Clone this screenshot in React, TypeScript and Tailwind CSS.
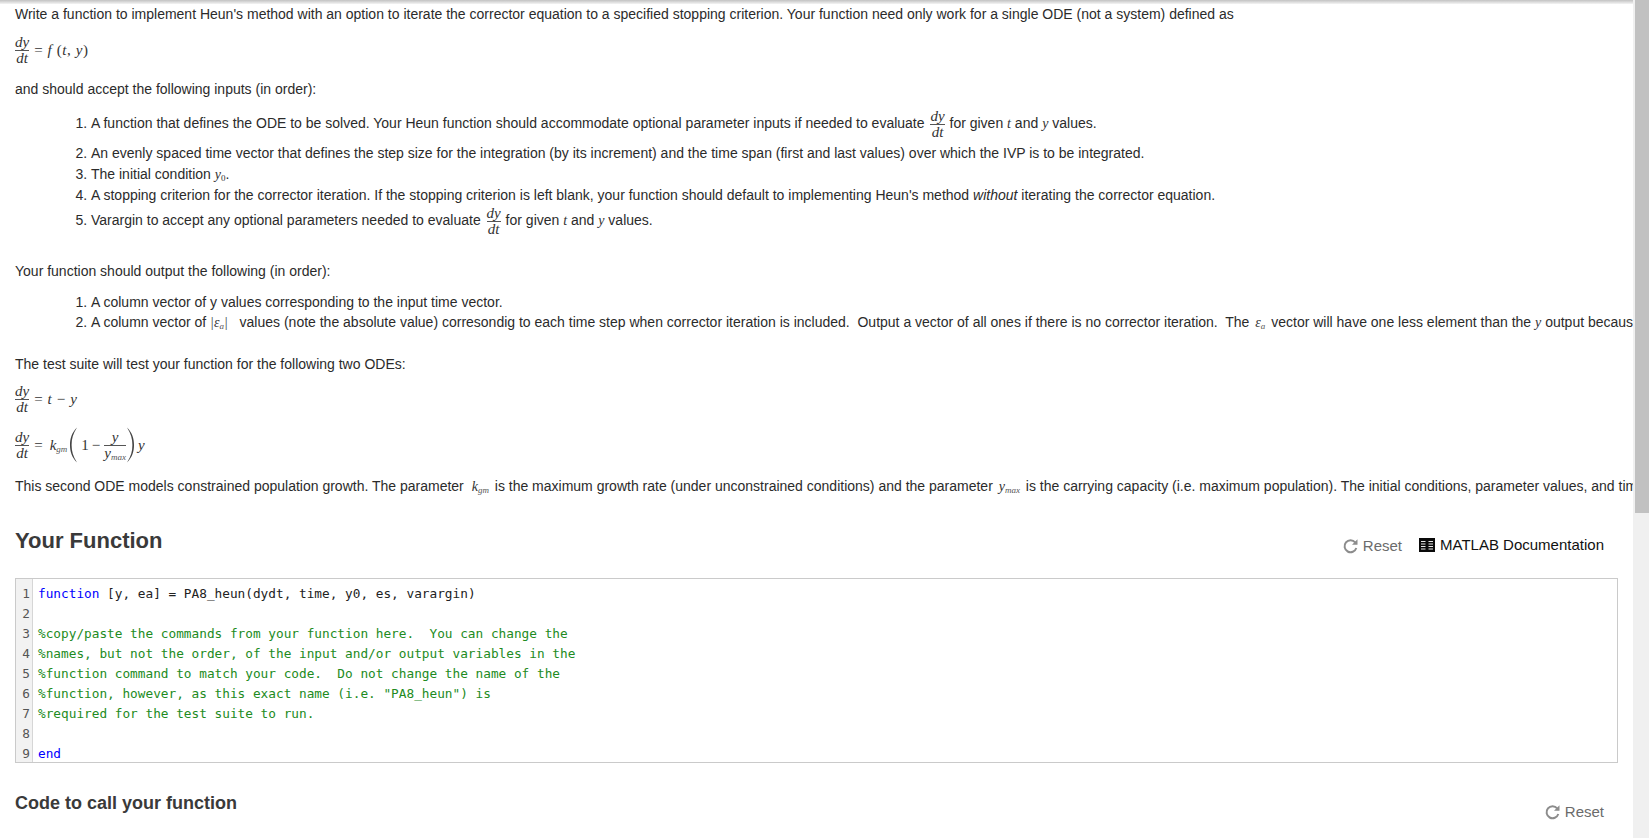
import React from 'react';

const Frac: React.FC<{ top: React.ReactNode; bottom: React.ReactNode; className?: string }> = ({ top, bottom, className = '' }) => (
    <span className={`inline-flex flex-col items-center align-middle font-['Liberation_Serif',serif] text-[15px] italic leading-[15px] text-[#333] ${className}`}>
        <span>{top}</span>
        <span className="self-stretch border-t border-[#555]" />
        <span>{bottom}</span>
    </span>
);

const M: React.FC<{ children: React.ReactNode; className?: string }> = ({ children, className = '' }) => (
    <span className={`font-['Liberation_Serif',serif] text-[14px] italic text-[#333] ${className}`}>{children}</span>
);

const Sub: React.FC<{ children: React.ReactNode }> = ({ children }) => (
    <sub className="text-[9px] italic text-[#555]">{children}</sub>
);

const ResetIcon: React.FC = () => (
    <svg width="17" height="16" viewBox="0 0 17 16" className="shrink-0">
        <path d="M13.2 4.4A6 6 0 1 0 14.3 10" fill="none" stroke="#8c8c8c" strokeWidth="2" />
        <path d="M15.5 1.2v5.6H10z" fill="#8c8c8c" />
    </svg>
);

const ResetButton: React.FC = () => (
    <span className="flex items-center gap-[4px] text-[15px] leading-[20px] text-[#6b6b6b]">
        <ResetIcon />
        Reset
    </span>
);

const BookIcon: React.FC = () => (
    <svg width="16" height="14" viewBox="0 0 16 14" className="shrink-0">
        <path d="M0 0h16v14H0z" fill="#0a0a0a" />
        <path d="M2 3.5h4.5M2 6h4.5M2 8.5h4.5M2 11h4.5M9.5 3.5H14M9.5 6H14M9.5 8.5H14M9.5 11H14" stroke="#e8e8e8" strokeWidth="1" />
    </svg>
);

const Paren: React.FC<{ flip?: boolean }> = ({ flip }) => (
    <svg width="9" height="36" viewBox="0 0 9 36" className={flip ? '-scale-x-100' : ''}>
        <path d="M8 0.5C2.5 6 1 12 1 18s1.5 12 7 17.5C4 29.5 2.6 24 2.6 18S4 6.5 8 0.5z" fill="#444" />
    </svg>
);

const codeLines: { text: string; kind: 'fn' | 'comment' | 'end' | 'blank' }[] = [
    { text: ' [y, ea] = PA8_heun(dydt, time, y0, es, varargin)', kind: 'fn' },
    { text: '', kind: 'blank' },
    { text: '%copy/paste the commands from your function here.  You can change the', kind: 'comment' },
    { text: '%names, but not the order, of the input and/or output variables in the', kind: 'comment' },
    { text: '%function command to match your code.  Do not change the name of the', kind: 'comment' },
    { text: '%function, however, as this exact name (i.e. "PA8_heun") is', kind: 'comment' },
    { text: '%required for the test suite to run.', kind: 'comment' },
    { text: '', kind: 'blank' },
    { text: 'end', kind: 'end' },
];

const App: React.FC = () => {
    return (
        <div className="flex h-[838px] w-[1649px] overflow-hidden bg-white font-['Liberation_Sans',Arial,sans-serif] text-[14px] text-[#2b2b2b]">
            <div className="w-[1633px] overflow-hidden">
                <div className="h-[4px] bg-linear-to-b from-[#c2c2c2] to-[#f4f4f4]" />
                <div className="px-[15px] whitespace-nowrap">
                    <p className="mt-[1px] leading-[18px]">Write a function to implement Heun's method with an option to iterate the corrector equation to a specified stopping criterion. Your function need only work for a single ODE (not a system) defined as</p>

                    <div className="mt-[11px] flex h-[32px] items-center gap-[5px]">
                        <Frac top="dy" bottom="dt" />
                        <span className="font-['Liberation_Serif',serif] text-[15px] tracking-[0.6px] text-[#333]">= <i>f</i> (<i>t</i>, <i>y</i>)</span>
                    </div>

                    <p className="mt-[14px] leading-[18px]">and should accept the following inputs (in order):</p>

                    <ol className="mt-[11px] list-decimal pl-[76px]">
                        <li className="h-[34px] leading-[28px]">A function that defines the ODE to be solved. Your Heun function should accommodate optional parameter inputs if needed to evaluate <Frac top="dy" bottom="dt" className="ml-[2px] mr-[1px]" /> for given <M>t</M> and <M>y</M> values.</li>
                        <li className="h-[21px] leading-[21px]">An evenly spaced time vector that defines the step size for the integration (by its increment) and the time span (first and last values) over which the IVP is to be integrated.</li>
                        <li className="h-[21px] leading-[21px]">The initial condition <M>y<sub className="text-[9px] not-italic">0</sub></M>.</li>
                        <li className="h-[21px] leading-[21px]">A stopping criterion for the corrector iteration. If the stopping criterion is left blank, your function should default to implementing Heun's method <em>without</em> iterating the corrector equation.</li>
                        <li className="h-[32px] leading-[28px]">Varargin to accept any optional parameters needed to evaluate <Frac top="dy" bottom="dt" className="ml-[2px] mr-[1px]" /> for given <M>t</M> and <M>y</M> values.</li>
                    </ol>

                    <p className="mt-[24px] leading-[18px]">Your function should output the following (in order):</p>

                    <ol className="mt-[12px] list-decimal pl-[76px]">
                        <li className="h-[20px] leading-[20px]">A column vector of y values corresponding to the input time vector.</li>
                        <li className="h-[20px] leading-[20px]">A column vector of <M className="mr-[4px]">|ε<Sub>a</Sub>|</M>&nbsp; values (note the absolute value) corresondig to each time step when corrector iteration is included.&nbsp; Output a vector of all ones if there is no corrector iteration.&nbsp; The <M className="mx-[2px]">ε<Sub>a</Sub></M> vector will have one less element than the <M>y</M> output because there is no error for the initial condition.</li>
                    </ol>

                    <p className="mt-[23px] leading-[18px]">The test suite will test your function for the following two ODEs:</p>

                    <div className="mt-[10px] flex h-[32px] items-center gap-[5px]">
                        <Frac top="dy" bottom="dt" />
                        <span className="font-['Liberation_Serif',serif] text-[15px] tracking-[0.6px] text-[#333]">= <i>t</i> − <i>y</i></span>
                    </div>

                    <div className="mt-[8px] flex h-[44px] items-center font-['Liberation_Serif',serif] text-[15px] text-[#333]">
                        <Frac top="dy" bottom="dt" />
                        <span className="ml-[5px]">=</span>
                        <span className="ml-[7px]"><i>k</i><Sub>gm</Sub></span>
                        <span className="ml-[2px] flex"><Paren /></span>
                        <span className="ml-[3px]">1</span>
                        <span className="ml-[3px]">−</span>
                        <span className="ml-[4px] flex">
                            <Frac top="y" bottom={<span>y<Sub>max</Sub></span>} />
                        </span>
                        <span className="flex"><Paren flip /></span>
                        <i className="ml-[3px]">y</i>
                    </div>

                    <p className="mt-[8px] leading-[22px]">This second ODE models constrained population growth. The parameter <M className="ml-[4px] mr-[2px]">k<Sub>gm</Sub></M> is the maximum growth rate (under unconstrained conditions) and the parameter <M className="mx-[2px]">y<Sub>max</Sub></M> is the carrying capacity (i.e. maximum population). The initial conditions, parameter values, and time vectors are given in the test suite.</p>
                </div>

                <div className="mt-[29px] px-[15px]">
                    <div className="flex h-[28px] items-start justify-between pr-[14px]">
                        <h2 className="text-[22px] font-bold leading-[28px] text-[#3a3a3a]">Your Function</h2>
                        <div className="mt-[9px] flex items-center gap-[17px]">
                            <ResetButton />
                            <span className="-mt-[2px] flex items-center gap-[5px] text-[15px] leading-[20px] text-[#111]"><BookIcon />MATLAB Documentation</span>
                        </div>
                    </div>

                    <div className="mt-[23px] flex h-[185px] w-[1603px] overflow-hidden border border-[#cacaca] font-['DejaVu_Sans_Mono',monospace] text-[12.75px] leading-[20px]">
                        <div className="w-[17px] shrink-0 border-r border-[#d6d6d6] bg-[#f2f2f2] pr-[2px] pt-[5px] text-right text-[#555]">
                            {codeLines.map((_, i) => <div key={i} className="h-[20px]">{i + 1}</div>)}
                        </div>
                        <div className="flex-1 pl-[5px] pt-[5px]">
                            {codeLines.map((line, i) => (
                                <div key={i} className="h-[20px] whitespace-pre">
                                    {line.kind === 'fn' && <><span className="text-[#0000ff]">function</span><span className="text-[#222]">{line.text}</span></>}
                                    {line.kind === 'comment' && <span className="text-[#228b22]">{line.text}</span>}
                                    {line.kind === 'end' && <span className="text-[#0000ff]">{line.text}</span>}
                                </div>
                            ))}
                        </div>
                    </div>

                    <div className="mt-[28px] flex h-[24px] items-start justify-between pr-[14px]">
                        <h3 className="text-[18px] font-bold leading-[24px] text-[#3a3a3a]">Code to call your function</h3>
                        <div className="mt-[11px]"><ResetButton /></div>
                    </div>

                    <div className="mt-[23px] h-[2px] w-[1595px] border-t border-[#f3f3f3]" />
                </div>
            </div>

            <div className="flex w-[16px] shrink-0 flex-col bg-[#f0f0f0] pl-[2px]">
                <div className="h-[513px] bg-[#c1c1c1]" />
            </div>
        </div>
    );
};

export default App;
